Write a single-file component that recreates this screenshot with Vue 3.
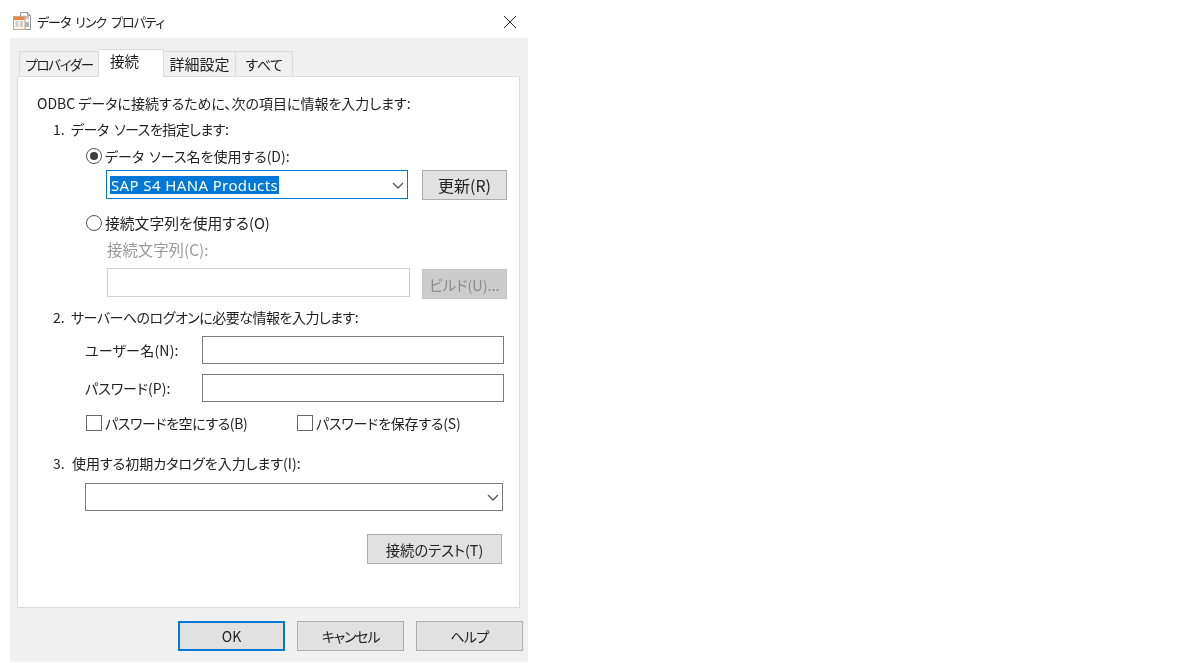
<template>
  <div class="page">
    <div class="dialog">
      <div class="titlebar">
        <svg class="appicon" width="20" height="20" viewBox="0 0 20 20">
          <path d="M8.5 1.5h7l3 3v14h-10z" fill="#f6f6f6" stroke="#9a9a9a" />
          <path d="M15.5 1.5v3h3" fill="none" stroke="#9a9a9a" />
          <rect x="11" y="5" width="6" height="3" fill="#c3c7cd" />
          <rect x="13" y="11" width="4" height="5" fill="#b4b8be" />
          <rect x="1.5" y="5.5" width="11.5" height="13" fill="#fdf7ee" stroke="#c9a485" />
          <rect x="2" y="6" width="10.5" height="3" fill="#e8864a" />
          <path d="M3.5 11h3M8 11h3M3.5 13h3M8 13h3M3.5 15h3M8 15h3" stroke="#a4a4ab" />
        </svg>
        <span class="title">データ リンク プロパティ</span>
        <svg class="close" width="14" height="14" viewBox="0 0 14 14">
          <path d="M1 1l12 12M13 1L1 13" stroke="#222" stroke-width="1" fill="none" />
        </svg>
      </div>
      <div class="client">
        <div class="tabs">
          <div v-for="t in tabs" :key="t.name" class="tab" :class="[t.cls, { active: t.active }]" :style="{ width: t.w + 'px' }">{{ t.name }}</div>
        </div>
        <div class="panel">
          <div class="line intro">ODBC データに接続するために、次の項目に情報を入力します:</div>
          <div class="line step step1"><span class="num">1.</span><span class="t1">データ ソースを指定します:</span></div>
          <div class="line radio-row r1"><span class="radio on"></span>データ ソース名を使用する(D):</div>
          <div class="combo-row">
            <div class="combo focused">
              <span class="sel">SAP S4 HANA Products</span>
              <svg class="chev" width="12" height="8" viewBox="0 0 12 8"><path d="M1 1l5 5 5-5" fill="none" stroke="#555" stroke-width="1.3" /></svg>
            </div>
            <button class="btn refresh">更新(R)</button>
          </div>
          <div class="line radio-row r2"><span class="radio"></span>接続文字列を使用する(O)</div>
          <div class="line disabled-label">接続文字列(C):</div>
          <div class="conn-row">
            <div class="input dis"></div>
            <button class="btn build">ビルド(U)...</button>
          </div>
          <div class="line step step2"><span class="num">2.</span><span class="t2">サーバーへのログオンに必要な情報を入力します:</span></div>
          <div class="field f1"><span class="flabel lu">ユーザー名(N):</span><div class="input dark"></div></div>
          <div class="field f2"><span class="flabel">パスワード(P):</span><div class="input dark"></div></div>
          <div class="checks">
            <div class="check c1"><span class="box"></span><span class="ct1">パスワードを空にする(B)</span></div>
            <div class="check"><span class="box"></span><span class="ct2">パスワードを保存する(S)</span></div>
          </div>
          <div class="line step step3"><span class="num n3">3.</span><span>使用する初期カタログを入力します(I):</span></div>
          <div class="combo plain">
            <svg class="chev" width="12" height="8" viewBox="0 0 12 8"><path d="M1 1l5 5 5-5" fill="none" stroke="#555" stroke-width="1.3" /></svg>
          </div>
          <button class="btn test">接続のテスト(T)</button>
        </div>
        <div class="footer">
          <button class="btn foot default">OK</button>
          <button class="btn foot cancel">キャンセル</button>
          <button class="btn foot help">ヘルプ</button>
        </div>
      </div>
    </div>
  </div>
</template>

<script setup>
const tabs = [
  { name: 'プロバイダー', w: 80, cls: 'tp' },
  { name: '接続', w: 65, active: true },
  { name: '詳細設定', w: 72, cls: 'ts' },
  { name: 'すべて', w: 57, cls: 'ta' }
]
</script>

<style>
html, body { margin: 0; background: #fff; }
</style>

<style scoped>
.page {
  width: 1183px;
  height: 663px;
  background: #fff;
  padding-left: 10px;
  box-sizing: border-box;
  overflow: hidden;
  font-family: "Noto Sans CJK JP", "Noto Sans", sans-serif;
  font-size: 14px;
  color: #222;
  font-feature-settings: "palt";
}
.dialog { width: 518px; filter: blur(0.3px); }
.titlebar {
  height: 38px;
  display: flex;
  align-items: center;
  box-sizing: border-box;
  padding: 4px 11px 0 2px;
}
.appicon { margin-right: 5px; }
.title { font-size: 13px; flex: 1; letter-spacing: -1px; word-spacing: 3px; }
.close { margin-top: 2px; }
.client {
  height: 624px;
  background: #f0f0f0;
  padding: 11px 8px 0 7px;
  box-sizing: border-box;
}
.tabs {
  height: 27px;
  display: flex;
  align-items: flex-end;
  padding-left: 2px;
  position: relative;
  z-index: 1;
}
.tab {
  height: 25px;
  box-sizing: border-box;
  border: 1px solid #dadada;
  border-bottom: 0;
  border-left-width: 0;
  background: #f0f0f0;
  text-align: center;
  line-height: 24px;
  font-size: 14px;
  white-space: nowrap;
}
.tab:first-child { border-left-width: 1px; }
.tp { font-size: 13.5px; letter-spacing: -1.3px; }
.ts { font-size: 15px; }
.ta { letter-spacing: -0.4px; }
.tab.active {
  height: 28px;
  background: #fff;
  text-align: left;
  padding-left: 11px;
  line-height: 22px;
  margin-bottom: -1px;
  font-size: 14.5px;
}
.panel {
  height: 532px;
  width: 503px;
  box-sizing: border-box;
  background: #fff;
  border: 1px solid #dcdcdc;
  padding: 16px 0 0 19px;
  display: flex;
  flex-direction: column;
  align-items: flex-start;
}
.line { height: 20px; line-height: 20px; white-space: nowrap; }
.step { margin-left: 16px; display: flex; }
.num { width: 18px; flex: none; }
.n3 { width: 19px; }
.t1 { letter-spacing: -0.53px; word-spacing: 3px; }
.t2 { letter-spacing: -0.5px; }
.step1 { margin-top: 6px; }
.step2 { margin-top: 8px; }
.step3 { margin-top: 20px; }
.radio-row { display: flex; align-items: center; margin-left: 49px; }
.r1 { margin-top: 7px; word-spacing: 2px; }
.r2 { margin-top: 13px; font-size: 14.8px; }
.radio {
  width: 16px;
  height: 16px;
  box-sizing: border-box;
  border: 1.5px solid #555;
  border-radius: 50%;
  margin-right: 3px;
  background: #fff;
  display: inline-block;
  position: relative;
}
.radio.on::after {
  content: "";
  position: absolute;
  left: 2.5px;
  top: 2.5px;
  width: 8px;
  height: 8px;
  border-radius: 50%;
  background: #3c3c3c;
}
.combo-row { display: flex; margin: 4px 0 0 69px; gap: 14px; }
.combo {
  box-sizing: border-box;
  background: #fff;
  display: flex;
  align-items: center;
  position: relative;
}
.combo.focused {
  width: 302px;
  height: 29px;
  border: 1px solid #0078d7;
  padding-left: 3px;
}
.combo.plain {
  width: 418px;
  height: 28px;
  border: 1px solid #7a7a7a;
  margin: 10px 0 0 48px;
}
.sel {
  background: #0078d7;
  color: #fff;
  line-height: 18px;
  padding: 0 1px;
  font-family: "Noto Sans", sans-serif;
  font-size: 15px;
  letter-spacing: 0.38px;
  white-space: nowrap;
}
.chev { position: absolute; right: 3px; top: 50%; margin-top: -3px; }
.btn {
  box-sizing: border-box;
  background: #e1e1e1;
  border: 1px solid #adadad;
  font: inherit;
  color: #222;
  padding: 0;
  white-space: nowrap;
}
.refresh { width: 85px; height: 30px; font-size: 16px; }
.disabled-label { margin: 6px 0 0 70px; color: #9a9a9a; font-size: 15.4px; }
.conn-row { display: flex; margin: 9px 0 0 70px; gap: 12px; }
.input { box-sizing: border-box; background: #fff; }
.input.dis { width: 303px; height: 29px; border: 1px solid #d0d0d0; }
.build {
  width: 85px;
  height: 30px;
  margin-top: 1px;
  background: #cccccc;
  border-color: #c4c4c4;
  color: #8a8a8a;
  font-size: 14.4px;
}
.field { display: flex; align-items: center; margin-left: 48px; }
.f1 { margin-top: 9px; }
.f2 { margin-top: 10px; }
.flabel { width: 117px; white-space: nowrap; }
.lu { letter-spacing: 0.2px; }
.input.dark { width: 302px; height: 28px; border: 1px solid #7a7a7a; }
.checks { display: flex; margin: 11px 0 0 49px; height: 20px; }
.check { display: flex; align-items: center; white-space: nowrap; }
.c1 { width: 211px; }
.ct1 { letter-spacing: -0.4px; }
.ct2 { letter-spacing: -0.2px; }
.box {
  width: 16px;
  height: 16px;
  box-sizing: border-box;
  border: 1.5px solid #666;
  margin-right: 3px;
  background: #fff;
}
.test { width: 135px; height: 30px; margin: 23px 0 0 330px; font-size: 14.3px; }
.footer { display: flex; gap: 12px; margin-top: 13px; padding-left: 161px; width: 346px; }
.foot { width: 107px; height: 30px; flex: none; }
.default { border: 2px solid #0078d7; }
.cancel { letter-spacing: -1.2px; }
.help { letter-spacing: -0.6px; }
</style>
